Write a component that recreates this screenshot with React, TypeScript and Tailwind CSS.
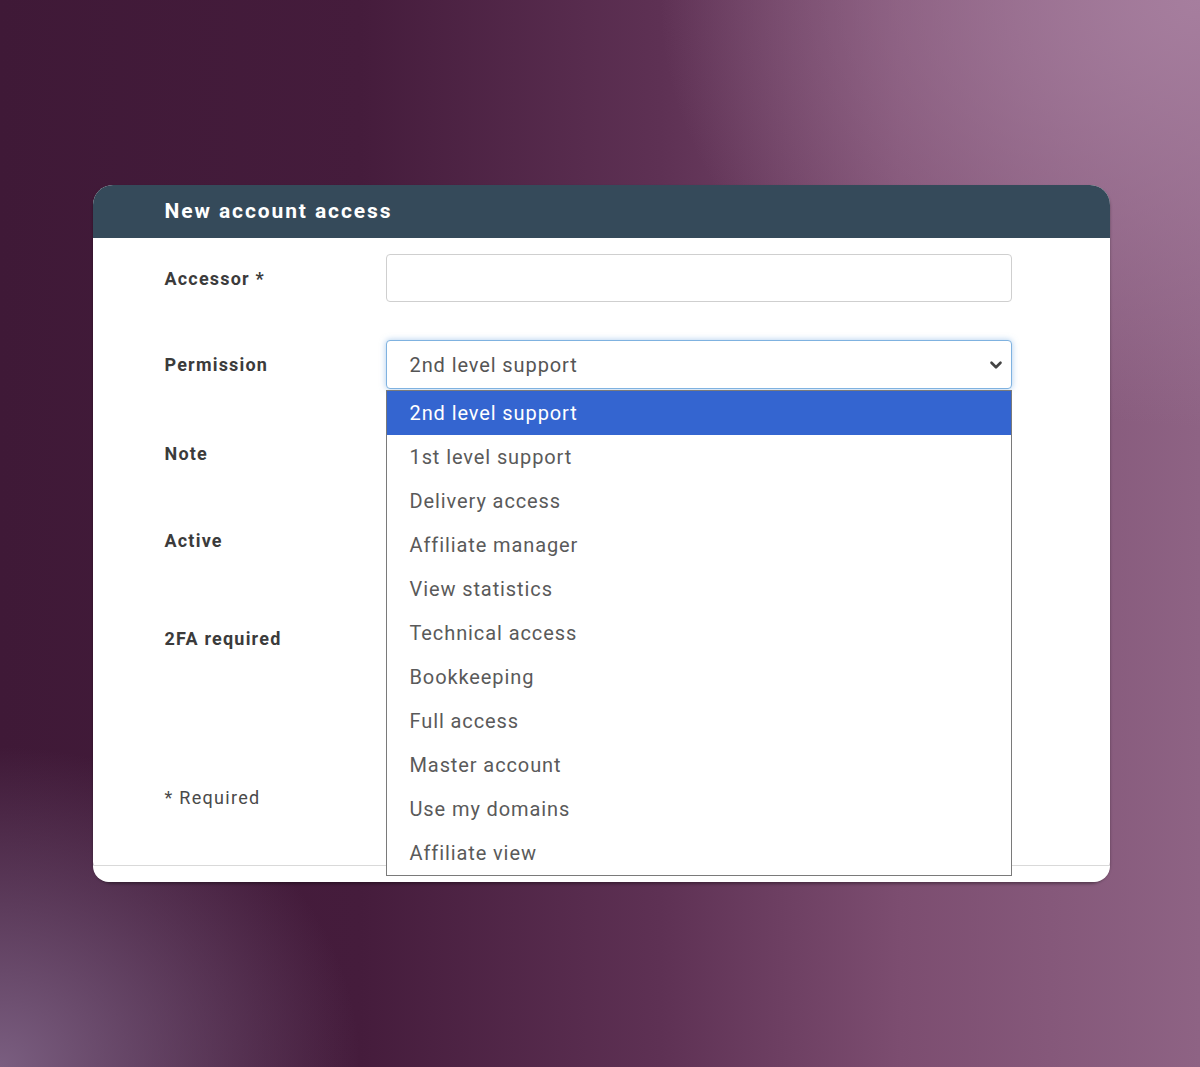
import React from "react";

const options = [
  "2nd level support",
  "1st level support",
  "Delivery access",
  "Affiliate manager",
  "View statistics",
  "Technical access",
  "Bookkeeping",
  "Full access",
  "Master account",
  "Use my domains",
  "Affiliate view",
];

function Label({ children }: { children: React.ReactNode }) {
  return (
    <div className="w-[221px] shrink-0 text-[18px] font-bold tracking-[1.2px] text-[#3b3b3b]">{children}</div>
  );
}

export default function App() {
  return (
    <div
      className="relative min-h-[1067px] w-full overflow-hidden bg-[#5a2f52] bg-[radial-gradient(ellipse_45%_40%_at_100%_0%,#a67e9e_0%,rgba(166,126,158,0)_100%),radial-gradient(ellipse_30%_30%_at_0%_100%,#7a5e80_0%,rgba(122,94,128,0)_100%),linear-gradient(90deg,#3f1937_0%,#451c3c_30%,#5e3154_55%,#7c4d70_75%,#8e6384_100%)] pt-[185px]"
      style={{ fontFamily: "Roboto, 'Noto Sans', sans-serif" }}
    >
      <div className="mx-auto w-[1017px] translate-x-[1px] overflow-visible rounded-[20px] bg-white shadow-[0_2px_3px_rgba(0,0,0,0.35)]">
        <div className="flex h-[53px] items-center rounded-t-[20px] bg-[#354a5a] pl-[72px]">
          <span className="text-[21px] font-bold tracking-[1.9px] text-white">New account access</span>
        </div>
        <div className="relative pl-[72px] pr-[98px]">
          <div className="mt-[16px] flex h-[48px] items-center">
            <Label>Accessor *</Label>
            <div className="h-[48px] flex-1 rounded-[4px] border border-[#cfcfcf] bg-white" />
          </div>
          <div className="relative mt-[38px] flex h-[49px] items-center">
            <Label>Permission</Label>
            <div className="relative flex-1">
              <div className="flex h-[49px] items-center justify-between rounded-[4px] border border-[#7fb2e0] bg-white pl-[23px] pr-[6px] shadow-[0_0_6px_rgba(102,160,220,0.55)]">
                <span className="text-[20px] tracking-[0.9px] text-[#555]">2nd level support</span>
                <svg width="18" height="18" viewBox="0 0 24 24" fill="none" stroke="#444" strokeWidth="3.5" strokeLinecap="round" strokeLinejoin="round">
                  <path d="M6 9l6 6 6-6" />
                </svg>
              </div>
              <div className="absolute left-0 right-0 top-[50px] z-10 border border-[#7a7a7a] bg-white">
                {options.map((o, i) => (
                  <div
                    key={o}
                    className={
                      i === 0
                        ? "flex h-[44px] items-center bg-[#3465d0] pl-[23px] text-[20px] tracking-[0.9px] text-white"
                        : "flex h-[44px] items-center pl-[23px] text-[20px] tracking-[0.9px] text-[#5a5a5a]"
                    }
                  >
                    {o}
                  </div>
                ))}
              </div>
            </div>
          </div>
          <div className="mt-[40px] flex h-[48px] items-center">
            <Label>Note</Label>
          </div>
          <div className="mt-[39px] flex h-[48px] items-center">
            <Label>Active</Label>
          </div>
          <div className="mt-[50px] flex h-[48px] items-center">
            <Label>2FA required</Label>
          </div>
          <div className="mt-[111px] flex h-[48px] items-center">
            <span className="text-[18px] tracking-[1.3px] text-[#4a4a4a]">* Required</span>
          </div>
          <div className="h-[44px]" />
        </div>
        <div className="h-[17px] rounded-b-[16px] border-t border-[#d9d9d9] bg-white" />
      </div>
    </div>
  );
}
